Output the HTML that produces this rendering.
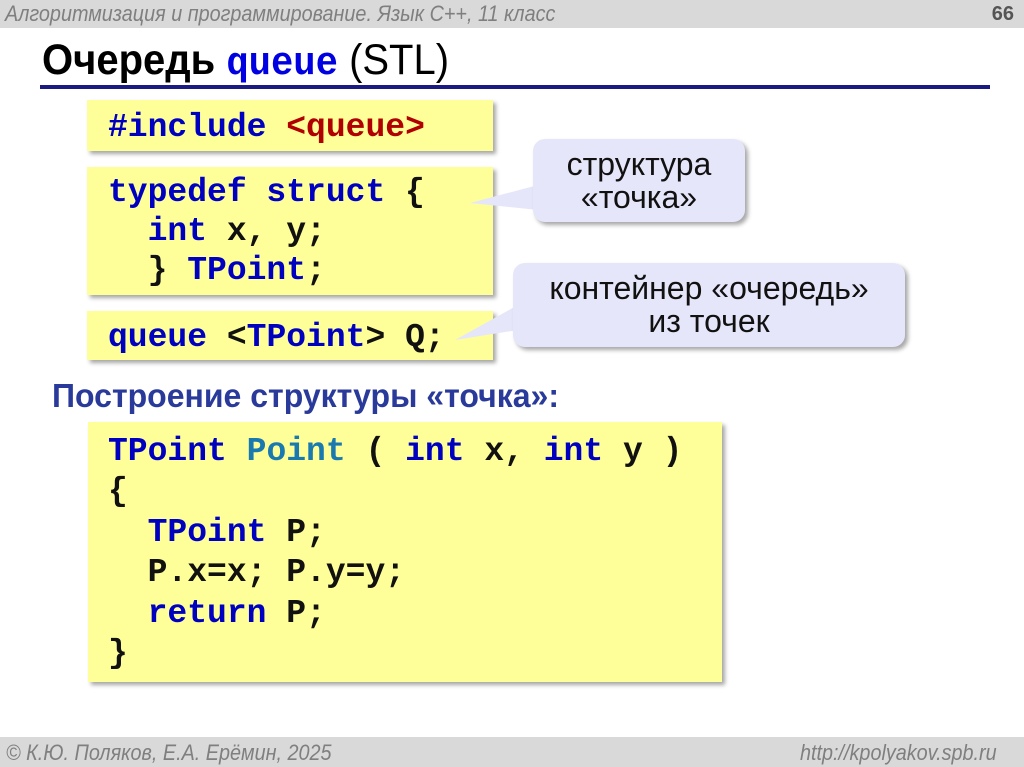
<!DOCTYPE html>
<html><head><meta charset="utf-8"><style>
body{margin:0;width:1024px;height:767px;position:relative;background:#fff;overflow:hidden;font-family:"Liberation Sans",sans-serif}
.hdr{position:absolute;left:0;top:0;width:1024px;height:28px;background:#d9d9d9}
.ftr{position:absolute;left:0;top:737px;width:1024px;height:30px;background:#d9d9d9}
.it{position:absolute;font-style:italic;color:#7f7f7f;font-size:22px;transform:scaleX(.9);transform-origin:left;white-space:nowrap}
.box{position:absolute;background:#ffff99;box-shadow:3px 3px 4px rgba(0,0,0,.35)}
.c{position:absolute;font-family:"Liberation Mono",monospace;font-size:33px;font-weight:bold;white-space:pre;color:#111;line-height:1}
.k{color:#0000c0}.r{color:#b00000}.t{color:#1a7ab0}
.bub{position:absolute;background:#e6e6fa;border-radius:12px;box-shadow:3px 3px 4px rgba(0,0,0,.35);font-size:32px;text-align:center;line-height:33px;color:#111}
</style></head><body>
<div class="hdr"></div>
<div class="it" style="left:5px;top:1px">Алгоритмизация и программирование. Язык С++, 11 класс</div>
<div style="position:absolute;right:10px;top:3px;font-weight:bold;color:#555;font-size:20px">66</div>
<div style="position:absolute;left:42px;top:36px;font-size:43px;color:#000;white-space:nowrap;transform:scaleX(.93);transform-origin:left"><b>Очередь</b> <b style="font-family:'Liberation Mono',monospace;color:#0000e0;font-size:40px">queue</b> (STL)</div>
<div style="position:absolute;left:40px;top:85px;width:950px;height:4px;background:#1a1a80"></div>

<div class="box" style="left:87px;top:100px;width:406px;height:51px"></div>
<div class="c" style="left:108px;top:111px"><span class="k">#include</span> <span class="r">&lt;queue&gt;</span></div>

<div class="box" style="left:87px;top:167px;width:406px;height:128px"></div>
<div class="c" style="left:108px;top:176px"><span class="k">typedef struct</span> {</div>
<div class="c" style="left:108px;top:215px">  <span class="k">int</span> x, y;</div>
<div class="c" style="left:108px;top:254px">  } <span class="k">TPoint</span>;</div>

<div class="box" style="left:87px;top:311px;width:406px;height:49px"></div>
<div class="c" style="left:108px;top:321px"><span class="k">queue</span> &lt;<span class="k">TPoint</span>&gt; Q;</div>

<svg style="position:absolute;left:0;top:0" width="1024" height="767">
<polygon points="538,185 470,203 538,210" fill="#e6e6fa"/>
<polygon points="518,305 455,340 518,330" fill="#e6e6fa"/>
</svg>
<div class="bub" style="left:533px;top:139px;width:212px;height:83px;padding-top:9px;box-sizing:border-box">структура<br>«точка»</div>
<div class="bub" style="left:513px;top:263px;width:392px;height:84px;padding-top:9px;box-sizing:border-box">контейнер «очередь»<br>из точек</div>

<div style="position:absolute;left:52px;top:377px;font-size:33px;font-weight:bold;color:#2a3a9a;white-space:nowrap;transform:scaleX(.97);transform-origin:left">Построение структуры «точка»:</div>

<div class="box" style="left:88px;top:422px;width:634px;height:260px"></div>
<div class="c" style="left:108px;top:435px"><span class="k">TPoint</span> <span class="t">Point</span> ( <span class="k">int</span> x, <span class="k">int</span> y )</div>
<div class="c" style="left:108px;top:475px">{</div>
<div class="c" style="left:108px;top:516px">  <span class="k">TPoint</span> P;</div>
<div class="c" style="left:108px;top:556px">  P.x=x; P.y=y;</div>
<div class="c" style="left:108px;top:597px">  <span class="k">return</span> P;</div>
<div class="c" style="left:108px;top:637px">}</div>

<div class="ftr"></div>
<div class="it" style="left:6px;top:740px">© К.Ю. Поляков, Е.А. Ерёмин, 2025</div>
<div class="it" style="left:800px;top:740px">http://kpolyakov.spb.ru</div>
</body></html>
